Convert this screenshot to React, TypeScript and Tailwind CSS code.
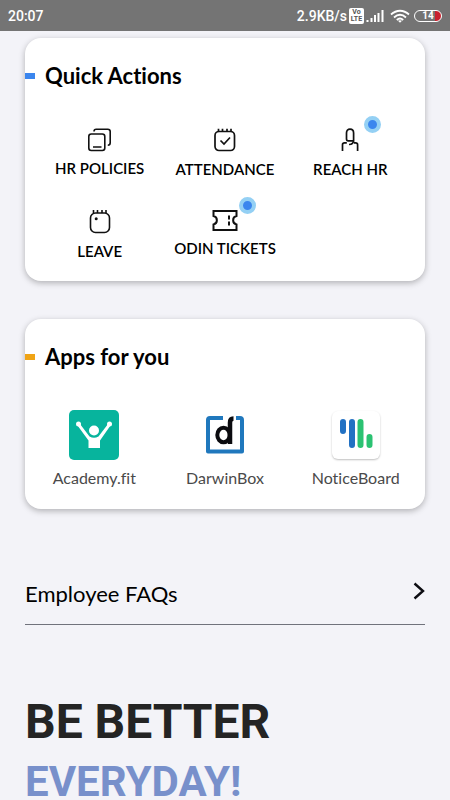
import type { ReactNode } from 'react';
import clsx from 'clsx';

interface Action {
  label: string;
  icon: ReactNode;
  isNew?: boolean;
}

interface AppLink {
  label: string;
  logo: ReactNode;
}

const PoliciesIcon = () => (
  <svg width="26" height="24" viewBox="0 0 26 24" fill="none" stroke="#111" strokeWidth="1.6">
    <rect x="1.8" y="6" width="16" height="16.5" rx="2.5" />
    <path d="M6 19h8.5M7 3.5c0-1.5.8-2.2 2.2-2.2h11.6c1.5 0 2.4.8 2.4 2.3v11.2c0 1.6-.9 2.4-2.4 2.4" />
  </svg>
);

const AttendanceIcon = () => (
  <svg width="24" height="25" viewBox="0 0 24 25" fill="none" stroke="#111" strokeWidth="1.7">
    <rect x="2" y="3.5" width="19.5" height="19" rx="4" />
    <path d="M5.5.8v3M9.5.8v3M14 .8v3M18 .8v3M7.5 12.5l3.5 3.5 6-6.5" />
  </svg>
);

const ReachIcon = () => (
  <svg width="18" height="25" viewBox="0 0 18 25" fill="none" stroke="#111" strokeWidth="1.7">
    <path d="M5.5 5C5.5 2.6 7 1.2 9 1.2s3.6 1.4 3.6 3.8v7.8H7.2c-1.1 0-1.7-.6-1.7-1.7V5M12.6 12.3c0 2.8-1.8 4.2-4.6 4.2M5.8 14.8H3.5c-1.3 0-2 .6-2 1.9V23M13 14.8h1.6c1.3 0 2 .6 2 1.9V23" />
  </svg>
);

const LeaveIcon = () => (
  <svg width="24" height="26" viewBox="0 0 24 26" fill="none" stroke="#111" strokeWidth="1.6">
    <rect x="2.5" y="4" width="19" height="19.5" rx="5" />
    <path d="M5.5 1v3M9.5 1v3M14 1v3M18 1v3" />
    <circle cx="8.2" cy="9.8" r="1.5" fill="#111" stroke="none" />
  </svg>
);

const TicketIcon = () => (
  <svg width="26" height="23" viewBox="0 0 26 23" fill="none" stroke="#111" strokeWidth="2">
    <path d="M1.5 2h23v5c-4.5 1-4.5 7.500 0 8.500V21h-23v-5.500c4.500-1 4.500-7.500 0-8.500z" />
    <path d="M17 6.5v4M17 12.5v4" />
  </svg>
);

const AcademyLogo = () => (
  <svg width="50" height="50" viewBox="0 0 50 50">
    <rect width="50" height="50" rx="5" fill="#07b49d" />
    <g fill="#fff">
      <circle cx="25" cy="20.5" r="5" />
      <circle cx="9.5" cy="14" r="2.5" />
      <circle cx="40.5" cy="14" r="2.5" />
      <path d="M8.5 15.5L11 14l9.500 12.500q4.500 2.500 9 0L39 14l2.500 1.500L31 30.500V38H19.500v-7.500z" />
    </g>
  </svg>
);

const DarwinLogo = () => (
  <svg width="50" height="50" viewBox="0 0 50 50" fill="none">
    <path d="M23 8H10a2 2 0 0 0-2 2v31.500h34V10a2 2 0 0 0-2-2h-4" stroke="#2078bd" strokeWidth="4" strokeLinejoin="round" />
    <ellipse cx="23.5" cy="25" rx="6.2" ry="7.3" stroke="#0b0b0f" strokeWidth="4" />
    <path d="M30 34V12.500q0-4 3.500-4" stroke="#0b0b0f" strokeWidth="4.5" />
  </svg>
);

const NoticeLogo = () => (
  <svg width="48" height="48" viewBox="0 0 48 48" strokeWidth="6" strokeLinecap="round">
    <path d="M11 11v9M20 11v23" stroke="#2271c3" />
    <path d="M28.5 11v23M37.5 26v8" stroke="#2bc272" />
  </svg>
);

const actions: Action[] = [
  { label: 'HR POLICIES', icon: <PoliciesIcon /> },
  { label: 'ATTENDANCE', icon: <AttendanceIcon /> },
  { label: 'REACH HR', icon: <ReachIcon />, isNew: true },
  { label: 'LEAVE', icon: <LeaveIcon /> },
  { label: 'ODIN TICKETS', icon: <TicketIcon />, isNew: true },
];

const apps: AppLink[] = [
  { label: 'Academy.fit', logo: <AcademyLogo /> },
  { label: 'DarwinBox', logo: <DarwinLogo /> },
  {
    label: 'NoticeBoard',
    logo: (
      <span className="my-px block overflow-hidden rounded-md shadow-[0_1px_2px_rgba(0,0,0,0.25)]">
        <NoticeLogo />
      </span>
    ),
  },
];

function StatusBar() {
  return (
    <header className="flex h-[31px] items-center justify-between bg-[#747474] px-2 pt-px font-[Roboto,sans-serif] text-sm font-medium text-white">
      <span>20:07</span>
      <div className="flex items-center">
        <span>2.9KB/s</span>
        <span className="ml-0.5 grid h-4 w-[15px] place-content-center rounded-xs bg-white text-center text-[7px] leading-[7px] font-bold text-[#555]">
          <span>Vo</span>
          <span>LTE</span>
        </span>
        <svg className="ml-0.5" width="18" height="14" viewBox="0 0 18 14" stroke="#fff" strokeWidth="2">
          <path d="M1.5 13v-2M5.5 13V9M9 13V6M12.5 13V4M16.5 13V1" />
        </svg>
        <svg className="ml-1.5" width="20" height="14" viewBox="0 0 20 14" fill="none" stroke="#fff" strokeWidth="1.8">
          <path d="M1 5.5c5.5-5 12.5-5 18 0M4 8.5c3.8-3.5 8.2-3.5 12 0M6.8 11c2-1.8 4.4-1.8 6.400 0" />
          <path d="M10 13.8l-2-2q2-1.3 4 0z" fill="#fff" stroke="none" />
        </svg>
        <span className="ml-1 flex h-3 w-7 items-center justify-center rounded-full border border-white bg-[linear-gradient(90deg,transparent_78%,#c8202c_78%)] text-[10px] leading-none font-bold">
          14
        </span>
      </div>
    </header>
  );
}

function Card({ title, accent, className, children }: { title: string; accent: string; className: string; children: ReactNode }) {
  return (
    <section className={clsx('rounded-2xl bg-white shadow-[0_2px_6px_rgba(0,0,0,0.28)]', className)}>
      <h2 className="flex items-center gap-2.5 text-[22px] leading-7 font-bold text-black">
        <span className={clsx('h-1.5 w-2.5', accent)} />
        {title}
      </h2>
      {children}
    </section>
  );
}

export default function App() {
  return (
    <div className="min-h-screen bg-[#f3f3f8] pb-4 font-[Lato,sans-serif] [font-variant-ligatures:none]">
      <StatusBar />
      <main className="px-[25px] pt-[7px]">
        <Card title="Quick Actions" accent="bg-[#3b86ee]" className="pt-6 pb-5">
          <div className="mt-[38px] grid grid-cols-3 items-start gap-y-[30px] px-3">
            {actions.map((action) => (
              <button key={action.label} className="flex flex-col items-center gap-1.5 text-[15px] leading-5 font-semibold text-black">
                <span className="relative">
                  {action.icon}
                  {action.isNew && (
                    <span className="absolute -top-3 left-1/2 ml-3.5 h-[17px] w-[17px] rounded-full border-4 border-[#94d0f4] bg-[#3b86ee]" />
                  )}
                </span>
                {action.label}
              </button>
            ))}
          </div>
        </Card>

        <Card title="Apps for you" accent="bg-[#f0a416]" className="mt-[38px] pt-6 pb-[21px]">
          <div className="mt-[39px] grid grid-cols-3 px-1">
            {apps.map((app) => (
              <a key={app.label} href="#" className="flex flex-col items-center gap-2 text-base leading-5 text-[#4a4a4a]">
                {app.logo}
                {app.label}
              </a>
            ))}
          </div>
        </Card>

        <button className="mt-[69px] flex w-full justify-between border-b border-[#70727c] pb-3.5 text-left text-[22px] leading-8 text-black">
          Employee FAQs
          <svg className="mt-1" width="12" height="18" viewBox="0 0 12 18" fill="none" stroke="#0c0c12" strokeWidth="2.4">
            <path d="M1.5 1.5L10 9l-8.5 7.5" />
          </svg>
        </button>

        <h1 className="mt-[67px] font-[Roboto,sans-serif] text-5xl leading-[60px] font-bold text-[#242424]">
          BE BETTER
          <span className="block text-[42px] text-[#7890cb]">EVERYDAY!</span>
        </h1>
      </main>
    </div>
  );
}
